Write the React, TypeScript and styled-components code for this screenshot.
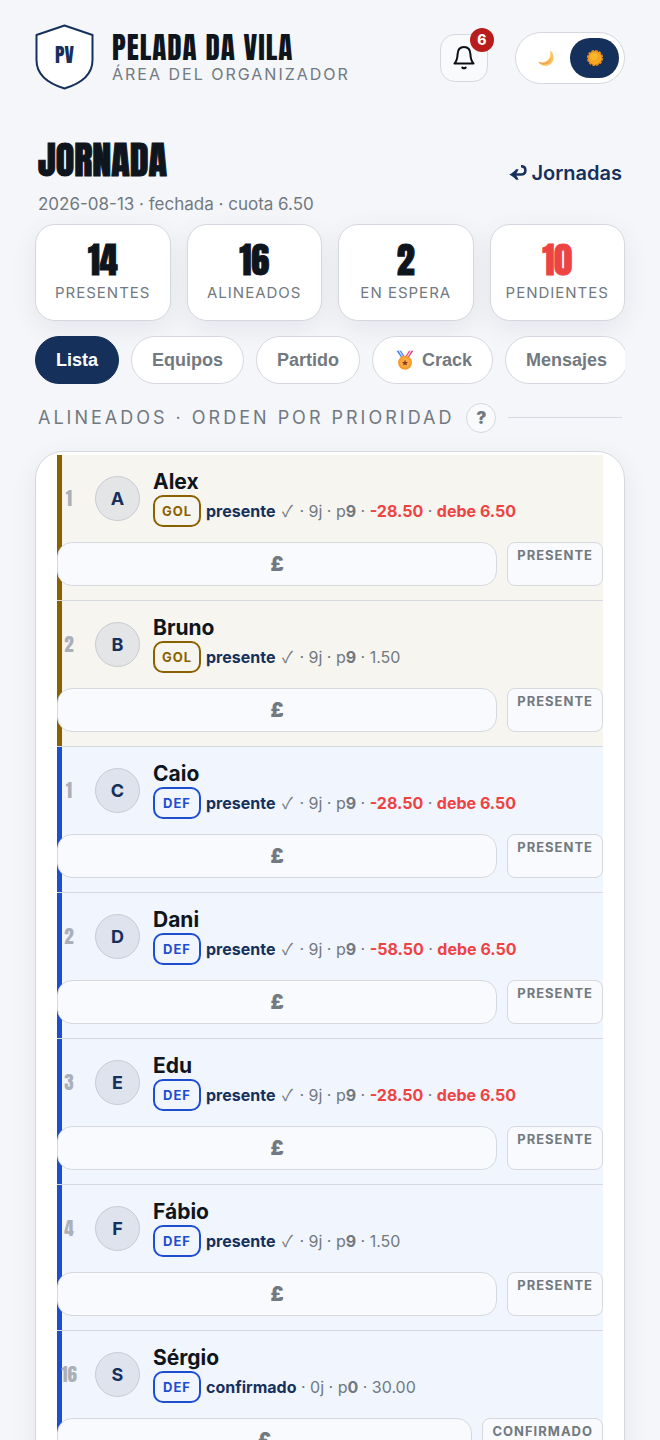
import React from "react";
import styled, { createGlobalStyle, css } from "styled-components";

const display = `Anton, Impact, "Liberation Sans Narrow", "Liberation Sans", sans-serif`;
const navy = "#16305c";
const ink = "#0f151d";
const muted = "#727980";
const line = "#d5d8de";
const red = "#ee4343";

const Global = createGlobalStyle`
  *, *::before, *::after { box-sizing: border-box; }
  body { margin: 0; background: #f4f6fa; color: ${ink}; font-family: Inter, "Liberation Sans", sans-serif; }
  h1, h2, p, ul, ol { margin: 0; padding: 0; }
  ul, ol { list-style: none; }
  button { font: inherit; color: inherit; cursor: pointer; }
`;

const Page = styled.div`
  padding: 24px 35px 0;
`;

const Header = styled.header`
  display: flex;
  align-items: center;
  height: 68px;
`;

const Crest = styled.svg`
  flex: none;
  align-self: flex-start;
  width: 59px;
  height: 66px;
`;

const Brand = styled.div`
  flex: 1;
  padding-left: 18px;
  white-space: nowrap;
`;

const BrandName = styled.p`
  font: 400 29px/32px ${display};
  letter-spacing: 1px;
`;

const BrandSub = styled.p`
  font-size: 16px;
  line-height: 20px;
  letter-spacing: 2px;
  color: ${muted};
`;

const BellButton = styled.button`
  position: relative;
  display: grid;
  place-items: center;
  width: 48px;
  height: 48px;
  padding: 0;
  margin-right: 27px;
  border: 1px solid ${line};
  border-radius: 15px;
  background: #f8fafc;
`;

const Count = styled.span`
  position: absolute;
  top: -7px;
  right: -7px;
  width: 24px;
  height: 24px;
  border-radius: 50%;
  background: #b91c1c;
  color: #fff;
  font-size: 14px;
  font-weight: 800;
  line-height: 24px;
`;

const ThemeSwitch = styled.div`
  display: flex;
  padding: 5px;
  border: 1px solid ${line};
  border-radius: 26px;
  background: #fff;
`;

const ThemeButton = styled.button<{ $on?: boolean }>`
  display: grid;
  place-items: center;
  width: 49px;
  height: 40px;
  padding: 0;
  border: 0;
  border-radius: 20px;
  background: ${(p) => (p.$on ? navy : "transparent")};
`;

const TitleRow = styled.div`
  display: flex;
  justify-content: space-between;
  padding: 46px 3px 0;
`;

const Title = styled.h1`
  font: 400 38px/44px ${display};
  -webkit-text-stroke: 1px currentColor;
`;

const Subtitle = styled.p`
  margin-top: 10px;
  font-size: 17px;
  line-height: 24px;
  color: ${muted};
`;

const BackLink = styled.a`
  display: flex;
  align-items: center;
  gap: 4px;
  height: 24px;
  margin-top: 23px;
  color: ${navy};
  font-size: 20px;
  font-weight: 600;
  line-height: 24px;
  text-decoration: none;
`;

const Stats = styled.ul`
  display: grid;
  grid-template-columns: repeat(4, 1fr);
  gap: 16px;
  margin-top: 8px;
`;

const Stat = styled.li<{ $alert?: boolean }>`
  height: 97px;
  padding-top: 16px;
  border: 1px solid ${line};
  border-radius: 20px;
  background: #fff;
  box-shadow: 0 8px 28px rgba(15, 21, 29, 0.07);
  text-align: center;
  color: ${(p) => (p.$alert ? red : ink)};
`;

const StatValue = styled.p`
  font: 400 36px/38px ${display};
  -webkit-text-stroke: 1px currentColor;
`;

const StatLabel = styled.p`
  margin-top: 5px;
  font-size: 15px;
  line-height: 18px;
  letter-spacing: 1px;
  color: ${muted};
`;

const Tabs = styled.nav`
  display: flex;
  gap: 12px;
  margin-top: 15px;
  overflow: hidden;
`;

const Tab = styled.button<{ $on?: boolean }>`
  flex: none;
  display: flex;
  align-items: center;
  height: 48px;
  padding: 0 20px;
  border: 1px solid ${(p) => (p.$on ? navy : line)};
  border-radius: 24px;
  background: ${(p) => (p.$on ? navy : "#fff")};
  color: ${(p) => (p.$on ? "#fff" : muted)};
  font: 700 18px/24px "Liberation Sans", sans-serif;

  svg { margin: 0 8px 0 3px; }
`;

const Section = styled.div`
  display: flex;
  align-items: center;
  margin-top: 18px;
  padding: 0 3px;
  height: 31px;

  &::after {
    content: "";
    flex: 1;
    height: 1px;
    margin-left: 12px;
    background: ${line};
  }
`;

const SectionTitle = styled.h2`
  font-size: 18px;
  font-weight: 400;
  line-height: 24px;
  letter-spacing: 3px;
  white-space: nowrap;
  color: ${muted};
`;

const Help = styled.button`
  flex: none;
  width: 30px;
  height: 30px;
  margin-left: 12px;
  padding: 0;
  border: 1px solid ${line};
  border-radius: 50%;
  background: #f8fafc;
  color: ${muted};
  font-size: 17px;
  font-weight: 900;
  line-height: 28px;
`;

const Panel = styled.ol`
  margin-top: 18px;
  padding: 3px 21px;
  border: 1px solid ${line};
  border-radius: 28px;
  background: #fff;
  box-shadow: 0 8px 28px rgba(15, 21, 29, 0.07);
`;

const tones = {
  gol: { main: "#8a6100", bg: "#f6f5ef", disc: "#e4e5e6" },
  def: { main: "#1d4ed0", bg: "#f1f5fe", disc: "#dee3ee" },
};
type Tone = keyof typeof tones;

const Row = styled.li<{ $tone: Tone }>`
  display: grid;
  align-content: space-between;
  height: 146px;
  padding: 14px 0;
  border-bottom: 1px solid ${line};
  background: ${(p) => css`linear-gradient(to right, ${tones[p.$tone].main} 5px, ${tones[p.$tone].bg} 5px)`};
`;

const Player = styled.div`
  display: grid;
  grid-template-columns: 24px 45px 1fr;
  align-items: center;
  height: 58px;
`;

const Rank = styled.span`
  font: 400 19px/24px ${display};
  text-align: center;
  color: #abb0b8;
`;

const Avatar = styled.span<{ $tone: Tone }>`
  width: 45px;
  height: 45px;
  margin-left: 14px;
  border: 1px solid #c8cbd3;
  border-radius: 50%;
  background: ${(p) => tones[p.$tone].disc};
  color: ${navy};
  font-size: 18px;
  font-weight: 700;
  line-height: 43px;
  text-align: center;
`;

const Info = styled.div`
  padding-left: 27px;
`;

const Name = styled.p`
  font-size: 21px;
  font-weight: 700;
  line-height: 26px;
`;

const Meta = styled.p`
  display: flex;
  align-items: center;
  gap: 5px;
  font-size: 16px;
  line-height: 32px;
  white-space: nowrap;
  color: ${muted};
`;

const Role = styled.span<{ $tone: Tone }>`
  width: 48px;
  height: 32px;
  border: 2px solid ${(p) => tones[p.$tone].main};
  border-radius: 10px;
  color: ${(p) => tones[p.$tone].main};
  font-size: 13px;
  font-weight: 700;
  line-height: 28px;
  letter-spacing: 1px;
  text-align: center;
`;

const State = styled.b`
  color: ${navy};
  font-weight: 700;
`;

const Tick = styled.span`
  margin: 0 2px;
  font-family: "Noto Sans CJK JP", sans-serif;
  line-height: 16px;
`;

const Debt = styled.b`
  color: ${red};
  font-weight: 700;
`;

const Actions = styled.div`
  display: flex;
  gap: 10px;
`;

const Pay = styled.button`
  flex: 1;
  height: 44px;
  padding: 0;
  border: 1px solid ${line};
  border-radius: 15px;
  background: #f8fafd;
  color: ${muted};
  font-size: 20px;
  font-weight: 900;
`;

const Status = styled.button`
  display: flex;
  align-items: flex-start;
  height: 44px;
  padding: 3px 9px;
  border: 1px solid ${line};
  border-radius: 8px;
  background: #f8fafd;
  color: ${muted};
  font-size: 13px;
  font-weight: 700;
  line-height: 18px;
  letter-spacing: 1px;
`;

const players: { rank: number; name: string; tone: Tone; state: string; games: number; prio: number; balance: string; owes?: string }[] = [
  { rank: 1, name: "Alex", tone: "gol", state: "presente", games: 9, prio: 9, balance: "-28.50", owes: "6.50" },
  { rank: 2, name: "Bruno", tone: "gol", state: "presente", games: 9, prio: 9, balance: "1.50" },
  { rank: 1, name: "Caio", tone: "def", state: "presente", games: 9, prio: 9, balance: "-28.50", owes: "6.50" },
  { rank: 2, name: "Dani", tone: "def", state: "presente", games: 9, prio: 9, balance: "-58.50", owes: "6.50" },
  { rank: 3, name: "Edu", tone: "def", state: "presente", games: 9, prio: 9, balance: "-28.50", owes: "6.50" },
  { rank: 4, name: "Fábio", tone: "def", state: "presente", games: 9, prio: 9, balance: "1.50" },
  { rank: 16, name: "Sérgio", tone: "def", state: "confirmado", games: 0, prio: 0, balance: "30.00" },
];

const stats = [
  { value: 14, label: "PRESENTES" },
  { value: 16, label: "ALINEADOS" },
  { value: 2, label: "EN ESPERA" },
  { value: 10, label: "PENDIENTES", alert: true },
];

const Shield = () => (
  <Crest viewBox="0 0 59 66" role="img" aria-label="PV">
    <path d="M29.500 1.500 L57.500 11 V36 C57.500 50 46 59.500 29.500 64.500 C13 59.500 1.500 50 1.500 36 V11 Z" fill="#fff" stroke={navy} strokeWidth="2" strokeLinejoin="round" />
    <text x="29.500" y="39" textAnchor="middle" fontFamily={display} fontSize="20" fill={navy}>PV</text>
  </Crest>
);

const Bell = () => (
  <svg width="24" height="26" viewBox="0 0 24 26" fill="none" stroke="#0b0f14" strokeWidth="2" strokeLinecap="round" strokeLinejoin="round">
    <path d="M2.500 18.500 H21.500 C19 16 18.600 14 18.400 9 C18.200 4.500 15.500 2 12 2 C8.500 2 5.800 4.500 5.600 9 C5.400 14 5 16 2.500 18.500 Z" />
    <path d="M10.300 22.500 C11.200 23.600 12.800 23.600 13.700 22.500" />
  </svg>
);

const Moon = () => (
  <svg width="18" height="18" viewBox="0 0 18 18">
    <path d="M13 1.200 C18 5 17.800 13 12.200 15.900 C8 18 3.200 16.500 1.200 12.600 C6 14.600 10.300 12.600 12.400 8.800 C13.700 6.300 13.700 3.500 13 1.200 Z" fill="#fbc55c" />
    <path d="M1.200 12.600 C6 15.600 12 14 14.500 8.500 C14.500 13 10 16 5.500 15.600 C3.600 15.200 2 14 1.200 12.600 Z" fill="#f0a05a" />
  </svg>
);

const Sun = () => (
  <svg width="18" height="18" viewBox="0 0 18 18">
    <circle cx="9" cy="9" r="7.200" fill="#e98f1c" />
    <circle cx="9" cy="9" r="7.300" fill="none" stroke="#e98f1c" strokeWidth="1.600" strokeDasharray="2.600 1.220" />
    <circle cx="9" cy="9" r="6.300" fill="#f5a623" />
    <circle cx="8" cy="7.500" r="3.600" fill="#fbb52c" />
  </svg>
);

const Medal = () => (
  <svg width="18" height="20" viewBox="0 0 18 20">
    <path d="M0.500 0.800 H5 L9.300 7.500 L6 8.800 Z" fill="#3f7fe8" />
    <path d="M2.400 0.800 H3.700 L8 7.700 L7 8.200 Z" fill="#dce9ff" />
    <path d="M17.500 0.800 H13 L8.700 7.500 L12 8.800 Z" fill="#e0447c" />
    <path d="M15.600 0.800 H14.300 L10 7.700 L11 8.200 Z" fill="#ffe3ee" />
    <circle cx="9" cy="12.800" r="7" fill="#f49b2d" />
    <circle cx="9" cy="12.800" r="5" fill="#f9ab3f" />
    <path d="M9 9.800 L9.900 11.900 L12 12 L10.400 13.400 L11 15.500 L9 14.400 L7 15.500 L7.600 13.400 L6 12 L8.100 11.900 Z" fill="#8c3a2b" />
  </svg>
);

const ReturnArrow = () => (
  <svg width="18" height="18" viewBox="0 0 18 18">
    <path d="M4 10.500 H11.500 C14.800 10.500 16.400 8.900 16.400 6.400 C16.400 3.700 14.900 2.300 12 2.300" fill="none" stroke={navy} strokeWidth="2.600" />
    <path d="M0.300 10.500 C3.200 9 5.600 7.300 7 5.200 H9.600 C8.800 7.200 7.800 9 6.600 10.500 C7.800 12 8.800 13.800 9.600 15.800 H7 C5.600 13.700 3.200 12 0.300 10.500 Z" fill={navy} />
  </svg>
);

export default function App() {
  return (
    <>
      <Global />
      <Page>
        <Header>
          <Shield />
          <Brand>
            <BrandName>PELADA DA VILA</BrandName>
            <BrandSub>ÁREA DEL ORGANIZADOR</BrandSub>
          </Brand>
          <BellButton aria-label="Notificaciones">
            <Bell />
            <Count>6</Count>
          </BellButton>
          <ThemeSwitch>
            <ThemeButton aria-label="Oscuro"><Moon /></ThemeButton>
            <ThemeButton $on aria-label="Claro"><Sun /></ThemeButton>
          </ThemeSwitch>
        </Header>

        <TitleRow>
          <div>
            <Title>JORNADA</Title>
            <Subtitle>2026-08-13 · fechada · cuota 6.50</Subtitle>
          </div>
          <BackLink href="#jornadas"><ReturnArrow />Jornadas</BackLink>
        </TitleRow>

        <Stats>
          {stats.map((s) => (
            <Stat key={s.label} $alert={s.alert}>
              <StatValue>{s.value}</StatValue>
              <StatLabel>{s.label}</StatLabel>
            </Stat>
          ))}
        </Stats>

        <Tabs>
          <Tab $on>Lista</Tab>
          <Tab>Equipos</Tab>
          <Tab>Partido</Tab>
          <Tab><Medal />Crack</Tab>
          <Tab>Mensajes</Tab>
        </Tabs>

        <Section>
          <SectionTitle>ALINEADOS · ORDEN POR PRIORIDAD</SectionTitle>
          <Help aria-label="Ayuda">?</Help>
        </Section>

        <Panel>
          {players.map((p) => (
            <Row key={p.name} $tone={p.tone}>
              <Player>
                <Rank>{p.rank}</Rank>
                <Avatar $tone={p.tone}>{p.name[0]}</Avatar>
                <Info>
                  <Name>{p.name}</Name>
                  <Meta>
                    <Role $tone={p.tone}>{p.tone.toUpperCase()}</Role>
                    <span>
                      <State>{p.state}</State>
                      {p.state === "presente" && <> <Tick>✓</Tick></>} · {p.games}j · p<b>{p.prio}</b> ·{" "}
                      {p.owes ? <><Debt>{p.balance}</Debt> · <Debt>debe {p.owes}</Debt></> : p.balance}
                    </span>
                  </Meta>
                </Info>
              </Player>
              <Actions>
                <Pay>£</Pay>
                <Status>{p.state.toUpperCase()}</Status>
              </Actions>
            </Row>
          ))}
        </Panel>
      </Page>
    </>
  );
}
